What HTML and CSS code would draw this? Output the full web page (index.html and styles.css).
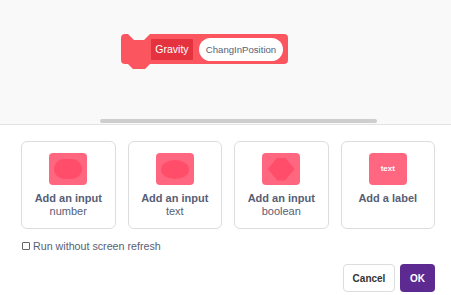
FILE: index.html
```html
<!DOCTYPE html>
<html lang="en">
<head>
    <meta charset="UTF-8">
    <meta name="viewport" content="width=device-width, initial-scale=1.0">
    <title>Make a Block</title>
    <link rel="stylesheet" href="styles.css">
</head>
<body>
    <div class="workspace">
        <svg class="block" width="170" height="38" viewBox="0 0 170 38">
            <path class="block-shape" d="M0,4 Q0,0 4,0 H7 L13,6 H23 L29,0 H163 Q167,0 167,4 V26 Q167,30 163,30 H29 L24,35 H12 L7,30 H4 Q0,30 0,26 Z"/>
            <rect class="block-label" x="30" y="5" width="42" height="21" rx="1"/>
            <text class="block-label-text" x="51" y="19">Gravity</text>
            <rect class="block-input" x="78" y="4" width="84" height="23" rx="11.5"/>
            <text class="block-input-text" x="120" y="19">ChangInPosition</text>
        </svg>
        <div class="scrollbar"></div>
    </div>

    <div class="options">
        <div class="option">
            <div class="icon"><div class="shape-number"></div></div>
            <div class="option-title">Add an input</div>
            <div class="option-sub">number</div>
        </div>
        <div class="option">
            <div class="icon"><div class="shape-text"></div></div>
            <div class="option-title">Add an input</div>
            <div class="option-sub">text</div>
        </div>
        <div class="option">
            <div class="icon"><div class="shape-bool"></div></div>
            <div class="option-title">Add an input</div>
            <div class="option-sub">boolean</div>
        </div>
        <div class="option">
            <div class="icon icon-label">text</div>
            <div class="option-title">Add a label</div>
        </div>
    </div>

    <label class="refresh">
        <input type="checkbox" class="refresh-box">
        <span>Run without screen refresh</span>
    </label>

    <div class="buttons">
        <button class="btn btn-cancel">Cancel</button>
        <button class="btn btn-ok">OK</button>
    </div>
</body>
</html>
```

FILE: styles.css
```css
body {
    margin: 0;
    width: 451px;
    height: 295px;
    overflow: hidden;
    background: #fff;
    font-family: "Liberation Sans", Arial, sans-serif;
    color: #575e75;
}
.workspace {
    position: relative;
    height: 124px;
    background-color: #f9f9f9;
    border-bottom: 1px solid #e3e3e3;
}
.block {
    position: absolute;
    left: 121px;
    top: 34px;
}
.block-shape {
    fill: #fb5660;
}
.block-label {
    fill: #e5323f;
}
.block-label-text {
    fill: #fff;
    font-size: 10.5px;
    text-anchor: middle;
}
.block-input {
    fill: #fff;
}
.block-input-text {
    fill: #575e75;
    font-size: 9.6px;
    text-anchor: middle;
}
.scrollbar {
    position: absolute;
    left: 100px;
    top: 119px;
    width: 277px;
    height: 4px;
    border-radius: 2px;
    background-color: #cecece;
}
.options {
    display: grid;
    grid-template-columns: repeat(4, 1fr);
    gap: 12px;
    padding: 16px 16px 0 21px;
}
.option {
    height: 75px;
    border: 1px solid #dddddd;
    border-radius: 6px;
    display: flex;
    flex-direction: column;
    align-items: center;
    padding-top: 11px;
}
.icon {
    width: 38px;
    height: 32px;
    border-radius: 4px;
    background-color: #ff6680;
    display: flex;
    align-items: center;
    justify-content: center;
    margin-bottom: 7px;
}
.shape-number {
    width: 28px;
    height: 20px;
    border-radius: 10px;
    background-color: #ff4d6a;
}
.shape-text {
    width: 28px;
    height: 19px;
    border-radius: 50%;
    background-color: #ff4d6a;
}
.shape-bool {
    width: 27px;
    height: 23px;
    background-color: #ff4d6a;
    clip-path: polygon(36% 0, 64% 0, 100% 50%, 64% 100%, 36% 100%, 0 50%);
}
.icon-label {
    color: #fff;
    font-size: 8px;
    font-weight: bold;
    padding-bottom: 2px;
    box-sizing: border-box;
}
.option-title {
    font-size: 11px;
    font-weight: bold;
    line-height: 13px;
}
.option-sub {
    font-size: 11px;
    line-height: 13px;
}
.refresh {
    display: flex;
    align-items: center;
    gap: 3px;
    margin: 11px 0 0 22px;
    font-size: 10.7px;
    color: #575e75;
}
.refresh-box {
    appearance: none;
    margin: 0;
    width: 8px;
    height: 8px;
    border: 1px solid #666;
    border-radius: 1px;
    background: #fff;
}
.buttons {
    display: flex;
    justify-content: flex-end;
    gap: 5px;
    padding: 12px 16px 0 0;
}
.btn {
    height: 28px;
    border-radius: 4px;
    font-family: "Liberation Sans", Arial, sans-serif;
    font-size: 10px;
    font-weight: bold;
    cursor: pointer;
}
.btn-cancel {
    width: 52px;
    background: #fff;
    border: 1px solid #dddddd;
    color: #333;
}
.btn-ok {
    width: 35px;
    background: #5c2a91;
    border: none;
    color: #fff;
}
```
